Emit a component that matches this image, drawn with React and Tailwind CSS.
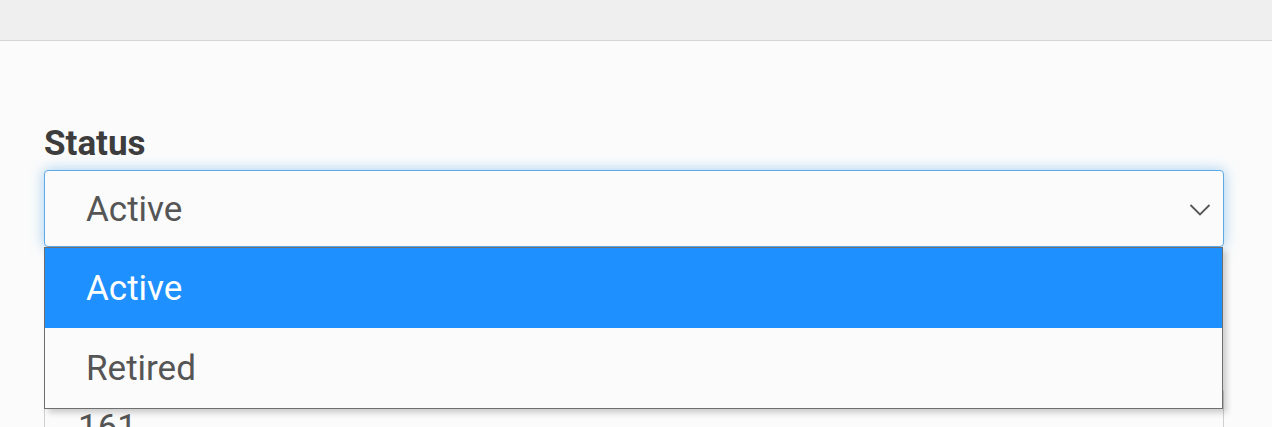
import { useState } from "react";

const opciones = ["Active", "Retired"];

export default function App() {
    const [valor] = useState("Active");

    return (
        <div className="min-h-screen bg-[#fbfbfb] font-['Roboto',sans-serif] text-[#555]">
            {/* Barra superior */}
            <div className="h-[41px] bg-[#efefef] border-b border-[#d6d6d6]" />

            <div className="px-[44px] pt-[81px] w-[1268px]">
                {/* Estado */}
                <label className="block text-[35px] leading-[44px] font-bold text-[#3d3d3d]">Status</label>
                <div className="relative mt-[4px]">
                    <div className="h-[77px] flex items-center justify-between pl-[41px] pr-[12px] pt-[3px] bg-[#fbfbfb] border border-[#5fa9e6] rounded-[4px] shadow-[0_0_14px_rgba(102,175,233,0.6)]">
                        <span className="text-[35px]">{valor}</span>
                        <svg width="22" height="14" viewBox="0 0 22 14" fill="none" stroke="#555" strokeWidth="1.8">
                            <path d="M1.5 2 L11 11.5 L20.5 2" />
                        </svg>
                    </div>

                    {/* Lista desplegable */}
                    <ul className="absolute z-10 left-0 right-[1px] top-[77px] bg-[#fbfbfb] border border-[#6e6e6e] shadow-[4px_4px_6px_rgba(0,0,0,0.18)]">
                        {opciones.map((op) => (
                            <li
                                key={op}
                                className={[
                                    "h-[80px] flex items-center pl-[41px] pt-[3px] text-[35px]",
                                    op === valor ? "bg-[#1e90ff] text-white" : "text-[#555]",
                                ].join(" ")}
                            >
                                {op}
                            </li>
                        ))}
                    </ul>

                    {/* Campo siguiente, tapado por la lista */}
                    <div className="mt-[141px] h-[77px] flex items-center pl-[33px] pt-[3px] border border-[#cfcfcf] rounded-[4px] bg-[#fbfbfb]">
                        <span className="text-[35px]">161</span>
                    </div>
                </div>
            </div>
        </div>
    );
}
